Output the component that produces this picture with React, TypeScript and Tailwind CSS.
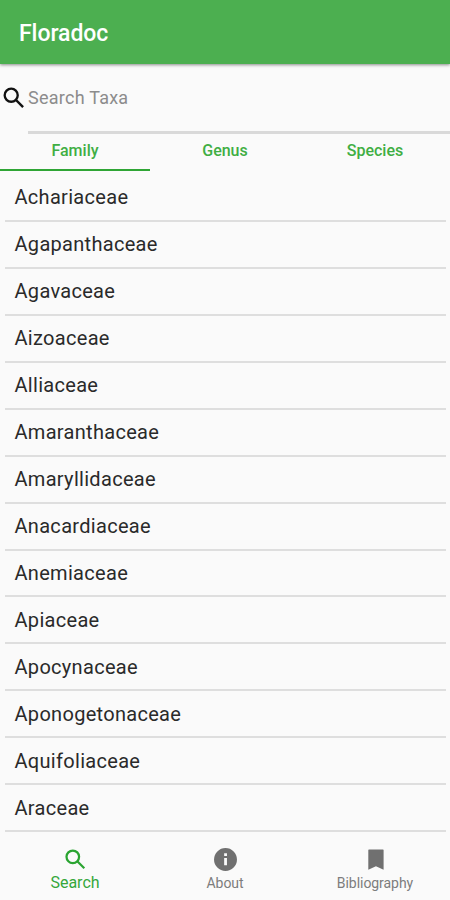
import { useState } from "react";

const tabs = ["Family", "Genus", "Species"];

const families = [
  "Achariaceae",
  "Agapanthaceae",
  "Agavaceae",
  "Aizoaceae",
  "Alliaceae",
  "Amaranthaceae",
  "Amaryllidaceae",
  "Anacardiaceae",
  "Anemiaceae",
  "Apiaceae",
  "Apocynaceae",
  "Aponogetonaceae",
  "Aquifoliaceae",
  "Araceae",
];

type IconProps = { className?: string };

function SearchIcon({ className }: IconProps) {
  return (
    <svg viewBox="0 0 24 24" fill="none" stroke="currentColor" strokeWidth="2" className={className}>
      <circle cx="9.6" cy="9.6" r="5.6" />
      <path d="M13.6 13.6l6.2 6.2" />
    </svg>
  );
}

function InfoIcon({ className }: IconProps) {
  return (
    <svg viewBox="0 0 24 24" fill="currentColor" fillRule="evenodd" className={className}>
      <path d="M12 1.8a10.2 10.2 0 1 0 0 20.4a10.2 10.2 0 1 0 0-20.4zM10.8 6.4h2.5v2.4h-2.5zM10.8 10.6h2.5v6.6h-2.5z" />
    </svg>
  );
}

function BookmarkIcon({ className }: IconProps) {
  return (
    <svg viewBox="0 0 24 24" fill="currentColor" className={className}>
      <path d="M6.2 3h12.4a.6.6 0 0 1 .6.6V21l-6.8-3-6.8 3V3.6a.6.6 0 0 1 .6-.6z" />
    </svg>
  );
}

const navItems = [
  { label: "Search", icon: SearchIcon },
  { label: "About", icon: InfoIcon },
  { label: "Bibliography", icon: BookmarkIcon },
];

export default function App() {
  const [tab, setTab] = useState("Family");
  const [page, setPage] = useState("Search");
  const [query, setQuery] = useState("");

  return (
    <div className="flex h-[900px] w-[450px] flex-col overflow-hidden bg-[#fafafa] font-[Roboto,sans-serif]">
      <header className="z-10 flex h-16 shrink-0 items-center bg-[#4caf50] pl-[19px] pt-[5px] shadow-[0_1px_3px_rgba(0,0,0,0.45)]">
        <h1 className="text-[23px] font-medium tracking-[-0.05px] text-white">Floradoc</h1>
      </header>

      {/* Search field */}
      <div className="flex h-[70px] shrink-0">
        <SearchIcon className="mt-[20px] size-[28px] shrink-0 text-[#111]" />
        <input
          value={query}
          onChange={(e) => setQuery(e.target.value)}
          placeholder="Search Taxa"
          className="min-w-0 flex-1 border-b-3 border-[#d9d9d9] text-[18px] tracking-[0.25px] outline-none placeholder:text-[#8c8c8c]"
        />
      </div>

      {/* Rank tabs */}
      <div className="grid h-[37px] shrink-0 grid-cols-3">
        {tabs.map((t) => (
          <button
            key={t}
            onClick={() => setTab(t)}
            className={`border-b-2 pb-[2px] text-[16px] font-medium text-[#3fae43] ${t === tab ? "border-[#2fa535]" : "border-transparent"}`}
          >
            {t}
          </button>
        ))}
      </div>

      <ul className="flex-1 pl-[5px] pr-1 pt-[4px]">
        {families.map((name) => (
          <li key={name} className="flex h-[46.95px] items-center border-b-2 border-[#dedede] pl-[9.5px] text-[20px] tracking-[0.3px] text-[#2a2a2a]">
            {name}
          </li>
        ))}
      </ul>

      <nav className="grid h-[68px] shrink-0 grid-cols-3">
        {navItems.map(({ label, icon: Icon }) => (
          <button
            key={label}
            onClick={() => setPage(label)}
            className={`flex flex-col items-center pt-[14px] ${label === page ? "text-[16px] text-[#35a73a]" : "text-[14px] tracking-[-0.05px] text-[#7d7d7d]"}`}
          >
            <Icon className={`size-[27px] ${label === page ? "text-[#2aa431]" : "text-[#707070]"}`} />
            <span className="leading-5">{label}</span>
          </button>
        ))}
      </nav>
    </div>
  );
}
